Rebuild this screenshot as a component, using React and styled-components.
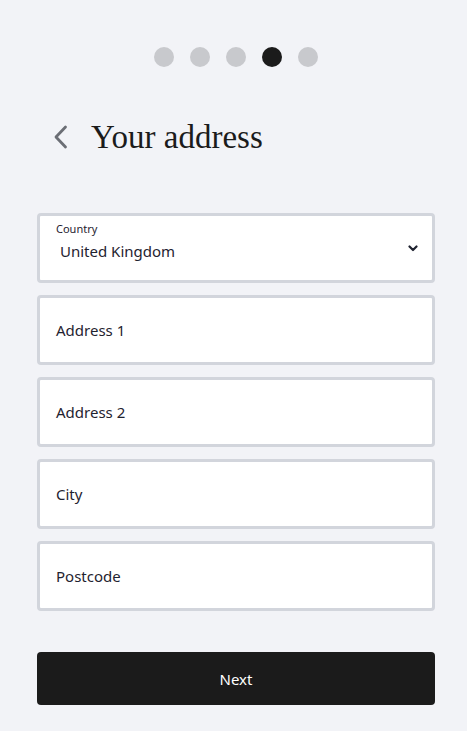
import React from "react";
import styled, { createGlobalStyle } from "styled-components";

const GlobalStyle = createGlobalStyle`
  html, body {
    margin: 0;
    padding: 0;
    background: #f2f3f7;
    font-family: "Noto Sans", "Open Sans", sans-serif;
  }
`;

const Page = styled.div`
  width: 467px;
  min-height: 731px;
  box-sizing: border-box;
  padding: 47px 32px 0 37px;
  background: #f2f3f7;
`;

const Steps = styled.div`
  display: flex;
  justify-content: center;
  gap: 16px;
`;

const Dot = styled.span`
  width: 20px;
  height: 20px;
  border-radius: 50%;
  background: ${(p) => (p.$active ? "#1b1b1b" : "#c8c9cd")};
`;

const Header = styled.div`
  display: flex;
  align-items: center;
  gap: 22px;
  margin: 47px 0 0 16px;
  height: 46px;
`;

const BackButton = styled.button`
  border: none;
  background: none;
  padding: 0;
  display: flex;
  cursor: pointer;
`;

const Title = styled.h1`
  margin: 0;
  font-family: "Liberation Serif", "DejaVu Serif", serif;
  font-weight: 400;
  font-size: 33px;
  color: #1b1b1b;
`;

const Form = styled.form`
  display: flex;
  flex-direction: column;
  gap: 12px;
  margin-top: 53px;
  width: 398px;
`;

const Field = styled.label`
  display: flex;
  flex-direction: column;
  justify-content: ${(p) => (p.$select ? "flex-start" : "center")};
  height: 70px;
  box-sizing: border-box;
  background: #fff;
  border: 3px solid #d2d5dc;
  border-radius: 4px;
  padding: ${(p) => (p.$select ? "5px 14px 0 16px" : "0 16px")};
`;

const Label = styled.span`
  font-size: 11px;
  color: #1f2330;
  line-height: 15px;
`;

const Value = styled.span`
  font-size: 15px;
  color: #1f2330;
  line-height: 20px;
  padding-left: ${(p) => (p.$indent ? "4px" : "0")};
  margin-top: ${(p) => (p.$indent ? "5px" : "0")};
`;

const SelectRow = styled.div`
  display: flex;
  align-items: center;
  justify-content: space-between;
`;

const NextButton = styled.button`
  margin-top: 41px;
  width: 398px;
  height: 53px;
  border: none;
  border-radius: 4px;
  background: #1b1b1b;
  color: #fff;
  font-family: "Noto Sans", "Open Sans", sans-serif;
  font-size: 15px;
  cursor: pointer;
`;

const fields = ["Address 1", "Address 2", "City", "Postcode"];

export default function App() {
  return (
    <>
      <GlobalStyle />
      <Page>
        <Steps>
          {[0, 1, 2, 3, 4].map((i) => (
            <Dot key={i} $active={i === 3} />
          ))}
        </Steps>
        <Header>
          <BackButton type="button" aria-label="Back">
            <svg width="16" height="24" viewBox="0 0 16 24">
              <path
                d="M12.5 2 L3 12 L12.5 22"
                fill="none"
                stroke="#6b6e75"
                strokeWidth="2.8"
                strokeLinecap="round"
                strokeLinejoin="round"
              />
            </svg>
          </BackButton>
          <Title>Your address</Title>
        </Header>
        <Form>
          <Field $select>
            <Label>Country</Label>
            <SelectRow>
              <Value $indent>United Kingdom</Value>
              <svg width="10" height="7" viewBox="0 0 10 7">
                <path
                  d="M1.5 1.5 L5 5 L8.5 1.5"
                  fill="none"
                  stroke="#1f2330"
                  strokeWidth="2.2"
                  strokeLinecap="round"
                  strokeLinejoin="round"
                />
              </svg>
            </SelectRow>
          </Field>
          {fields.map((f) => (
            <Field key={f}>
              <Value>{f}</Value>
            </Field>
          ))}
        </Form>
        <NextButton type="button">Next</NextButton>
      </Page>
    </>
  );
}
